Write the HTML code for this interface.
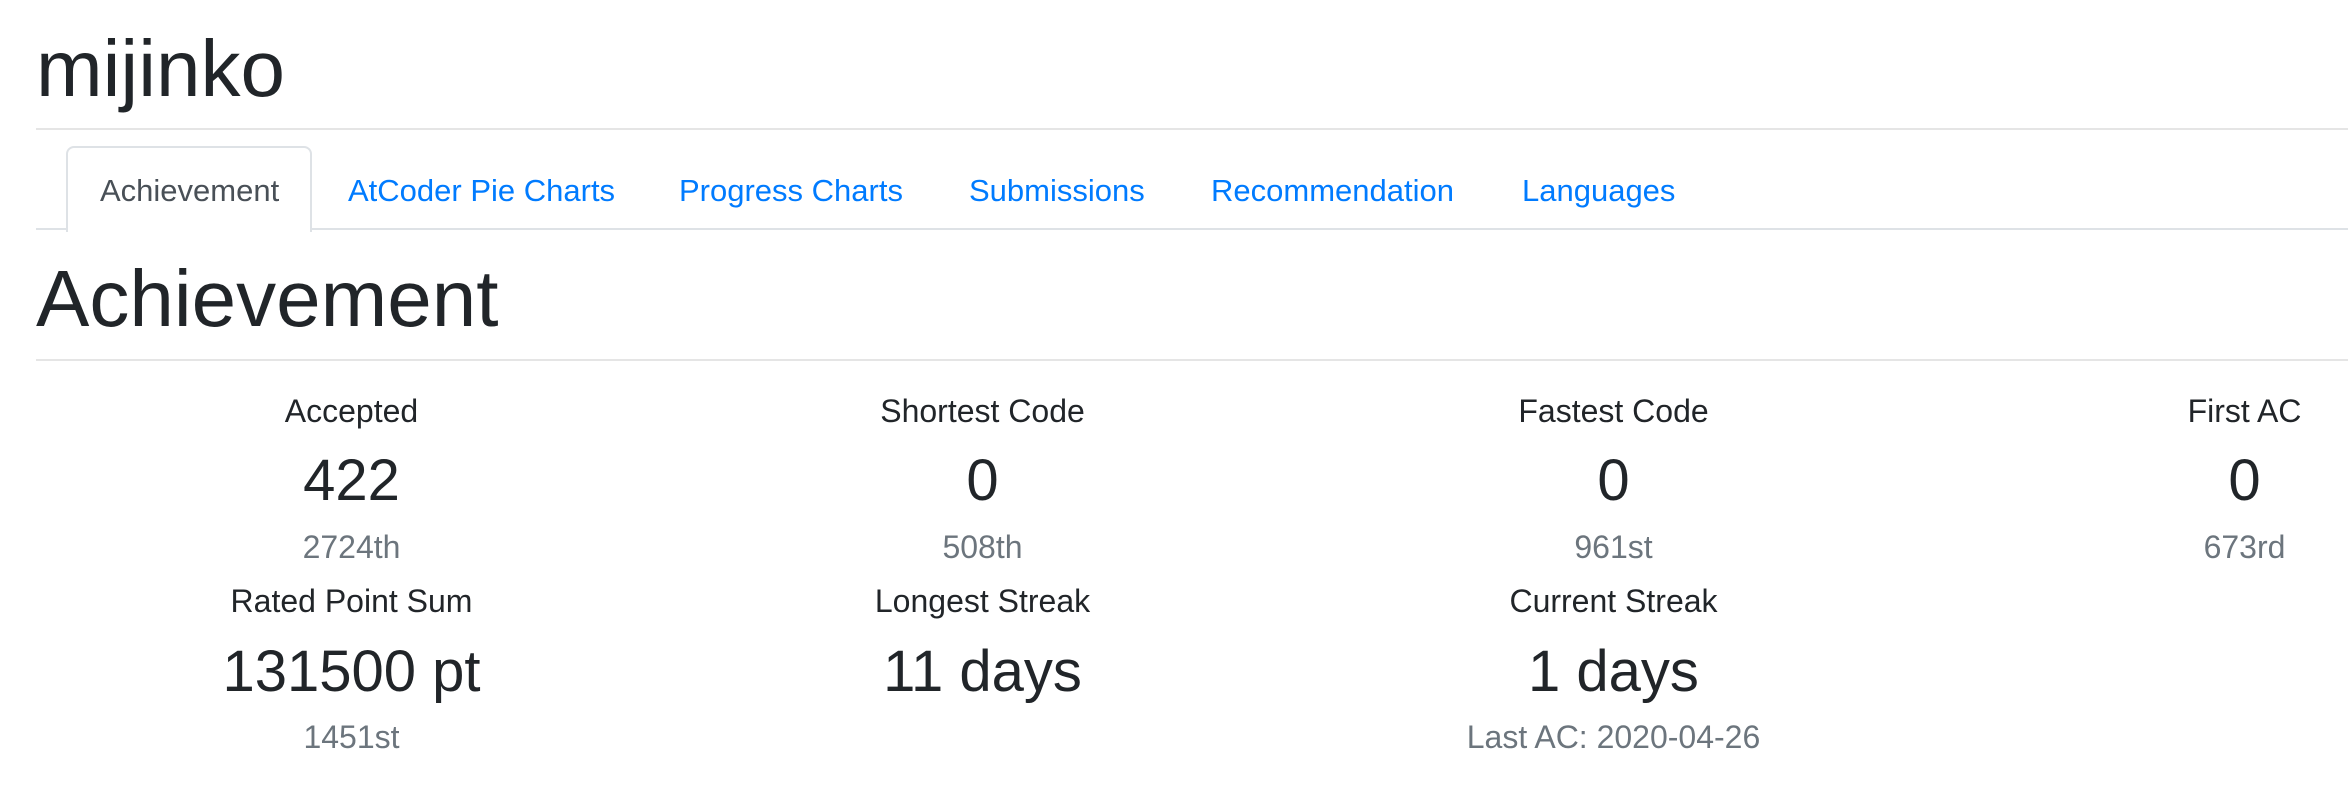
<!DOCTYPE html>
<html><head><meta charset="utf-8"><style>
*{margin:0;padding:0;box-sizing:border-box}
body{width:2348px;height:804px;background:#fff;font-family:"Liberation Sans",sans-serif;color:#212529;position:relative;overflow:hidden}
.a{position:absolute;line-height:1;white-space:nowrap}
.line{position:absolute;left:36px;right:0;height:2px;background:#e5e5e5}
.tab{font-size:31px;color:#007bff;top:175px}
.c{position:absolute;width:631px;text-align:center;line-height:1;white-space:nowrap}
.l{font-size:32px}
.v{font-size:58px}
.s{font-size:32px;color:#6c757d}
</style></head><body>
<div class="a" style="left:36px;top:29px;font-size:80px">mijinko</div>
<div class="line" style="top:128px"></div>
<div class="line" style="top:228px;background:#dee2e6"></div>
<div style="position:absolute;left:66px;top:146px;width:246px;height:86px;border:2px solid #dee2e6;border-bottom:none;border-radius:8px 8px 0 0;background:#fff"></div>
<div class="a tab" style="left:100px;color:#495057">Achievement</div>
<div class="a tab" style="left:348px">AtCoder Pie Charts</div>
<div class="a tab" style="left:679px">Progress Charts</div>
<div class="a tab" style="left:969px">Submissions</div>
<div class="a tab" style="left:1211px">Recommendation</div>
<div class="a tab" style="left:1522px">Languages</div>
<div class="a" style="left:36px;top:259px;font-size:80px">Achievement</div>
<div class="line" style="top:359px"></div>

<div class="c l" style="left:36px;top:395px">Accepted</div>
<div class="c v" style="left:36px;top:452px">422</div>
<div class="c s" style="left:36px;top:531px">2724th</div>
<div class="c l" style="left:667px;top:395px">Shortest Code</div>
<div class="c v" style="left:667px;top:452px">0</div>
<div class="c s" style="left:667px;top:531px">508th</div>
<div class="c l" style="left:1298px;top:395px">Fastest Code</div>
<div class="c v" style="left:1298px;top:452px">0</div>
<div class="c s" style="left:1298px;top:531px">961st</div>
<div class="c l" style="left:1929px;top:395px">First AC</div>
<div class="c v" style="left:1929px;top:452px">0</div>
<div class="c s" style="left:1929px;top:531px">673rd</div>

<div class="c l" style="left:36px;top:585px">Rated Point Sum</div>
<div class="c v" style="left:36px;top:643px">131500 pt</div>
<div class="c s" style="left:36px;top:721px">1451st</div>
<div class="c l" style="left:667px;top:585px">Longest Streak</div>
<div class="c v" style="left:667px;top:643px">11 days</div>
<div class="c l" style="left:1298px;top:585px">Current Streak</div>
<div class="c v" style="left:1298px;top:643px">1 days</div>
<div class="c s" style="left:1298px;top:721px">Last AC: 2020-04-26</div>
</body></html>
